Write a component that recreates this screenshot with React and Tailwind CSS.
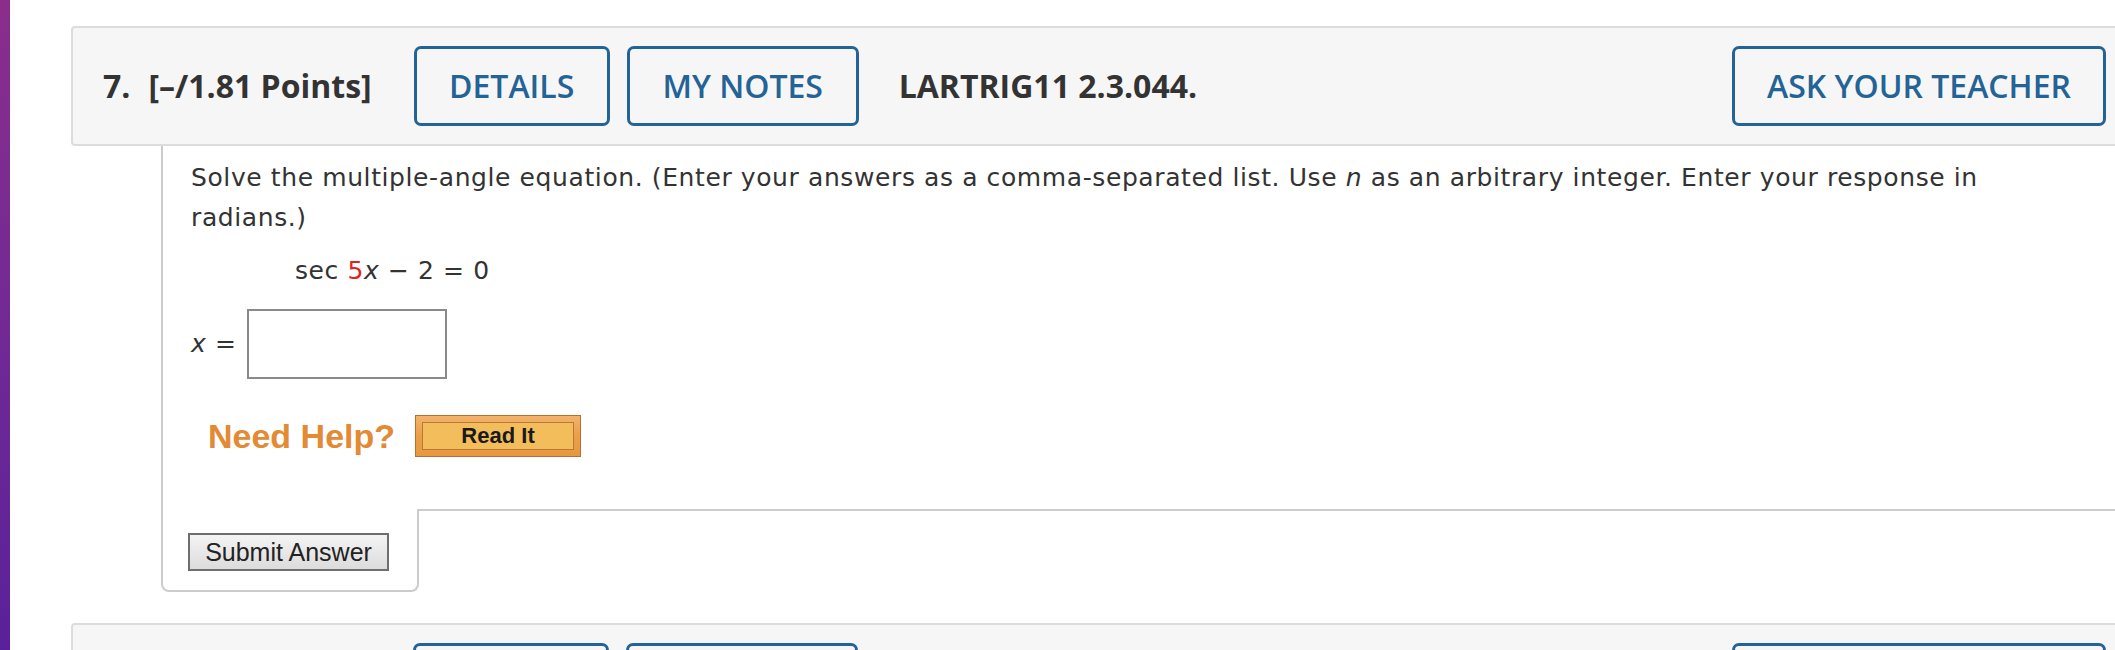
import React from "react";

const btn =
  "flex h-[80px] shrink-0 items-center justify-center rounded-[7px] border-[3px] border-[#246396] font-semibold text-[#246396]";

function Header({ num, showText = true }) {
  return (
    <div className="flex h-[120px] items-center rounded-[4px] border-2 border-[#dcdcdc] bg-[#f6f6f6] pl-[30px] pr-[23px] font-['Open_Sans',sans-serif] text-[32px]">
      {showText ? (
        <>
          <span className="font-bold text-[#333]">{num}.</span>
          <span className="ml-[18px] mr-[42px] font-bold text-[#333]">[–/1.81 Points]</span>
        </>
      ) : (
        <div className="w-[310px] shrink-0" />
      )}
      <button className={`${btn} w-[196px]`}>{showText ? "DETAILS" : ""}</button>
      <button className={`${btn} ml-[17px] w-[232px]`}>{showText ? "MY NOTES" : ""}</button>
      {showText && <span className="ml-[40px] font-bold text-[#333]">LARTRIG11 2.3.044.</span>}
      <button className={`${btn} ml-auto w-[374px]`}>{showText ? "ASK YOUR TEACHER" : ""}</button>
    </div>
  );
}

export default function App() {
  return (
    <div className="flex h-[650px] w-[2115px] overflow-hidden bg-white">
      <div className="w-[10px] shrink-0 bg-gradient-to-b from-[#8b2d8d] to-[#5a209b]" />
      <div className="ml-[61px] w-[2060px] shrink-0 pt-[26px]">
        <Header num={7} />
        <div className="ml-[90px]">
          <div className="border-l-2 border-[#cccccc] pb-[52px] pl-[28px] pt-[12px] font-['DejaVu_Sans',sans-serif] text-[25px] leading-[40px] tracking-[0.6px] text-[#333]">
            <p className="w-[1840px]">
              Solve the multiple-angle equation. (Enter your answers as a comma-separated list. Use <i>n</i> as an arbitrary integer. Enter your response in radians.)
            </p>
            <div className="mt-[13px] pl-[104px]">
              sec <span className="text-[#e3241b]">5</span>
              <i>x</i> − 2 = 0
            </div>
            <div className="mt-[18px] flex items-center">
              <span>
                <i>x</i> =
              </span>
              <div className="ml-[10px] h-[70px] w-[200px] border-2 border-[#8a8a8a] bg-white" />
            </div>
            <div className="mt-[36px] flex items-center pl-[17px]">
              <span className="font-['Liberation_Sans',Arial,sans-serif] text-[34px] font-bold leading-none tracking-normal text-[#e38a34]">
                Need Help?
              </span>
              <div className="ml-[20px] flex h-[42px] w-[166px] items-center justify-center border border-[#b0723a] bg-gradient-to-b from-[#f3b36a] via-[#eb9e48] to-[#e8983f] p-[6px]">
                <div className="flex h-full w-full items-center justify-center border border-[#b67a3c] bg-[#f3bd5c] font-['Liberation_Sans',Arial,sans-serif] text-[22px] font-bold leading-none tracking-normal text-[#1a1a1a]">
                  Read It
                </div>
              </div>
            </div>
          </div>
          <div className="flex">
            <div className="h-[83px] w-[258px] shrink-0 rounded-b-[8px] border-2 border-t-0 border-[#cccccc] pl-[25px] pt-[24px]">
              <button className="flex h-[38px] w-[201px] items-center justify-center border-2 border-[#6e6e6e] bg-gradient-to-b from-[#f4f4f4] to-[#dcdcdc] font-['Liberation_Sans',Arial,sans-serif] text-[25px] leading-none text-[#222]">
                Submit Answer
              </button>
            </div>
            <div className="flex-1 border-t-2 border-[#cccccc]" />
          </div>
        </div>
        <div className="mt-[31px]">
          <Header num={8} showText={false} />
        </div>
      </div>
    </div>
  );
}
